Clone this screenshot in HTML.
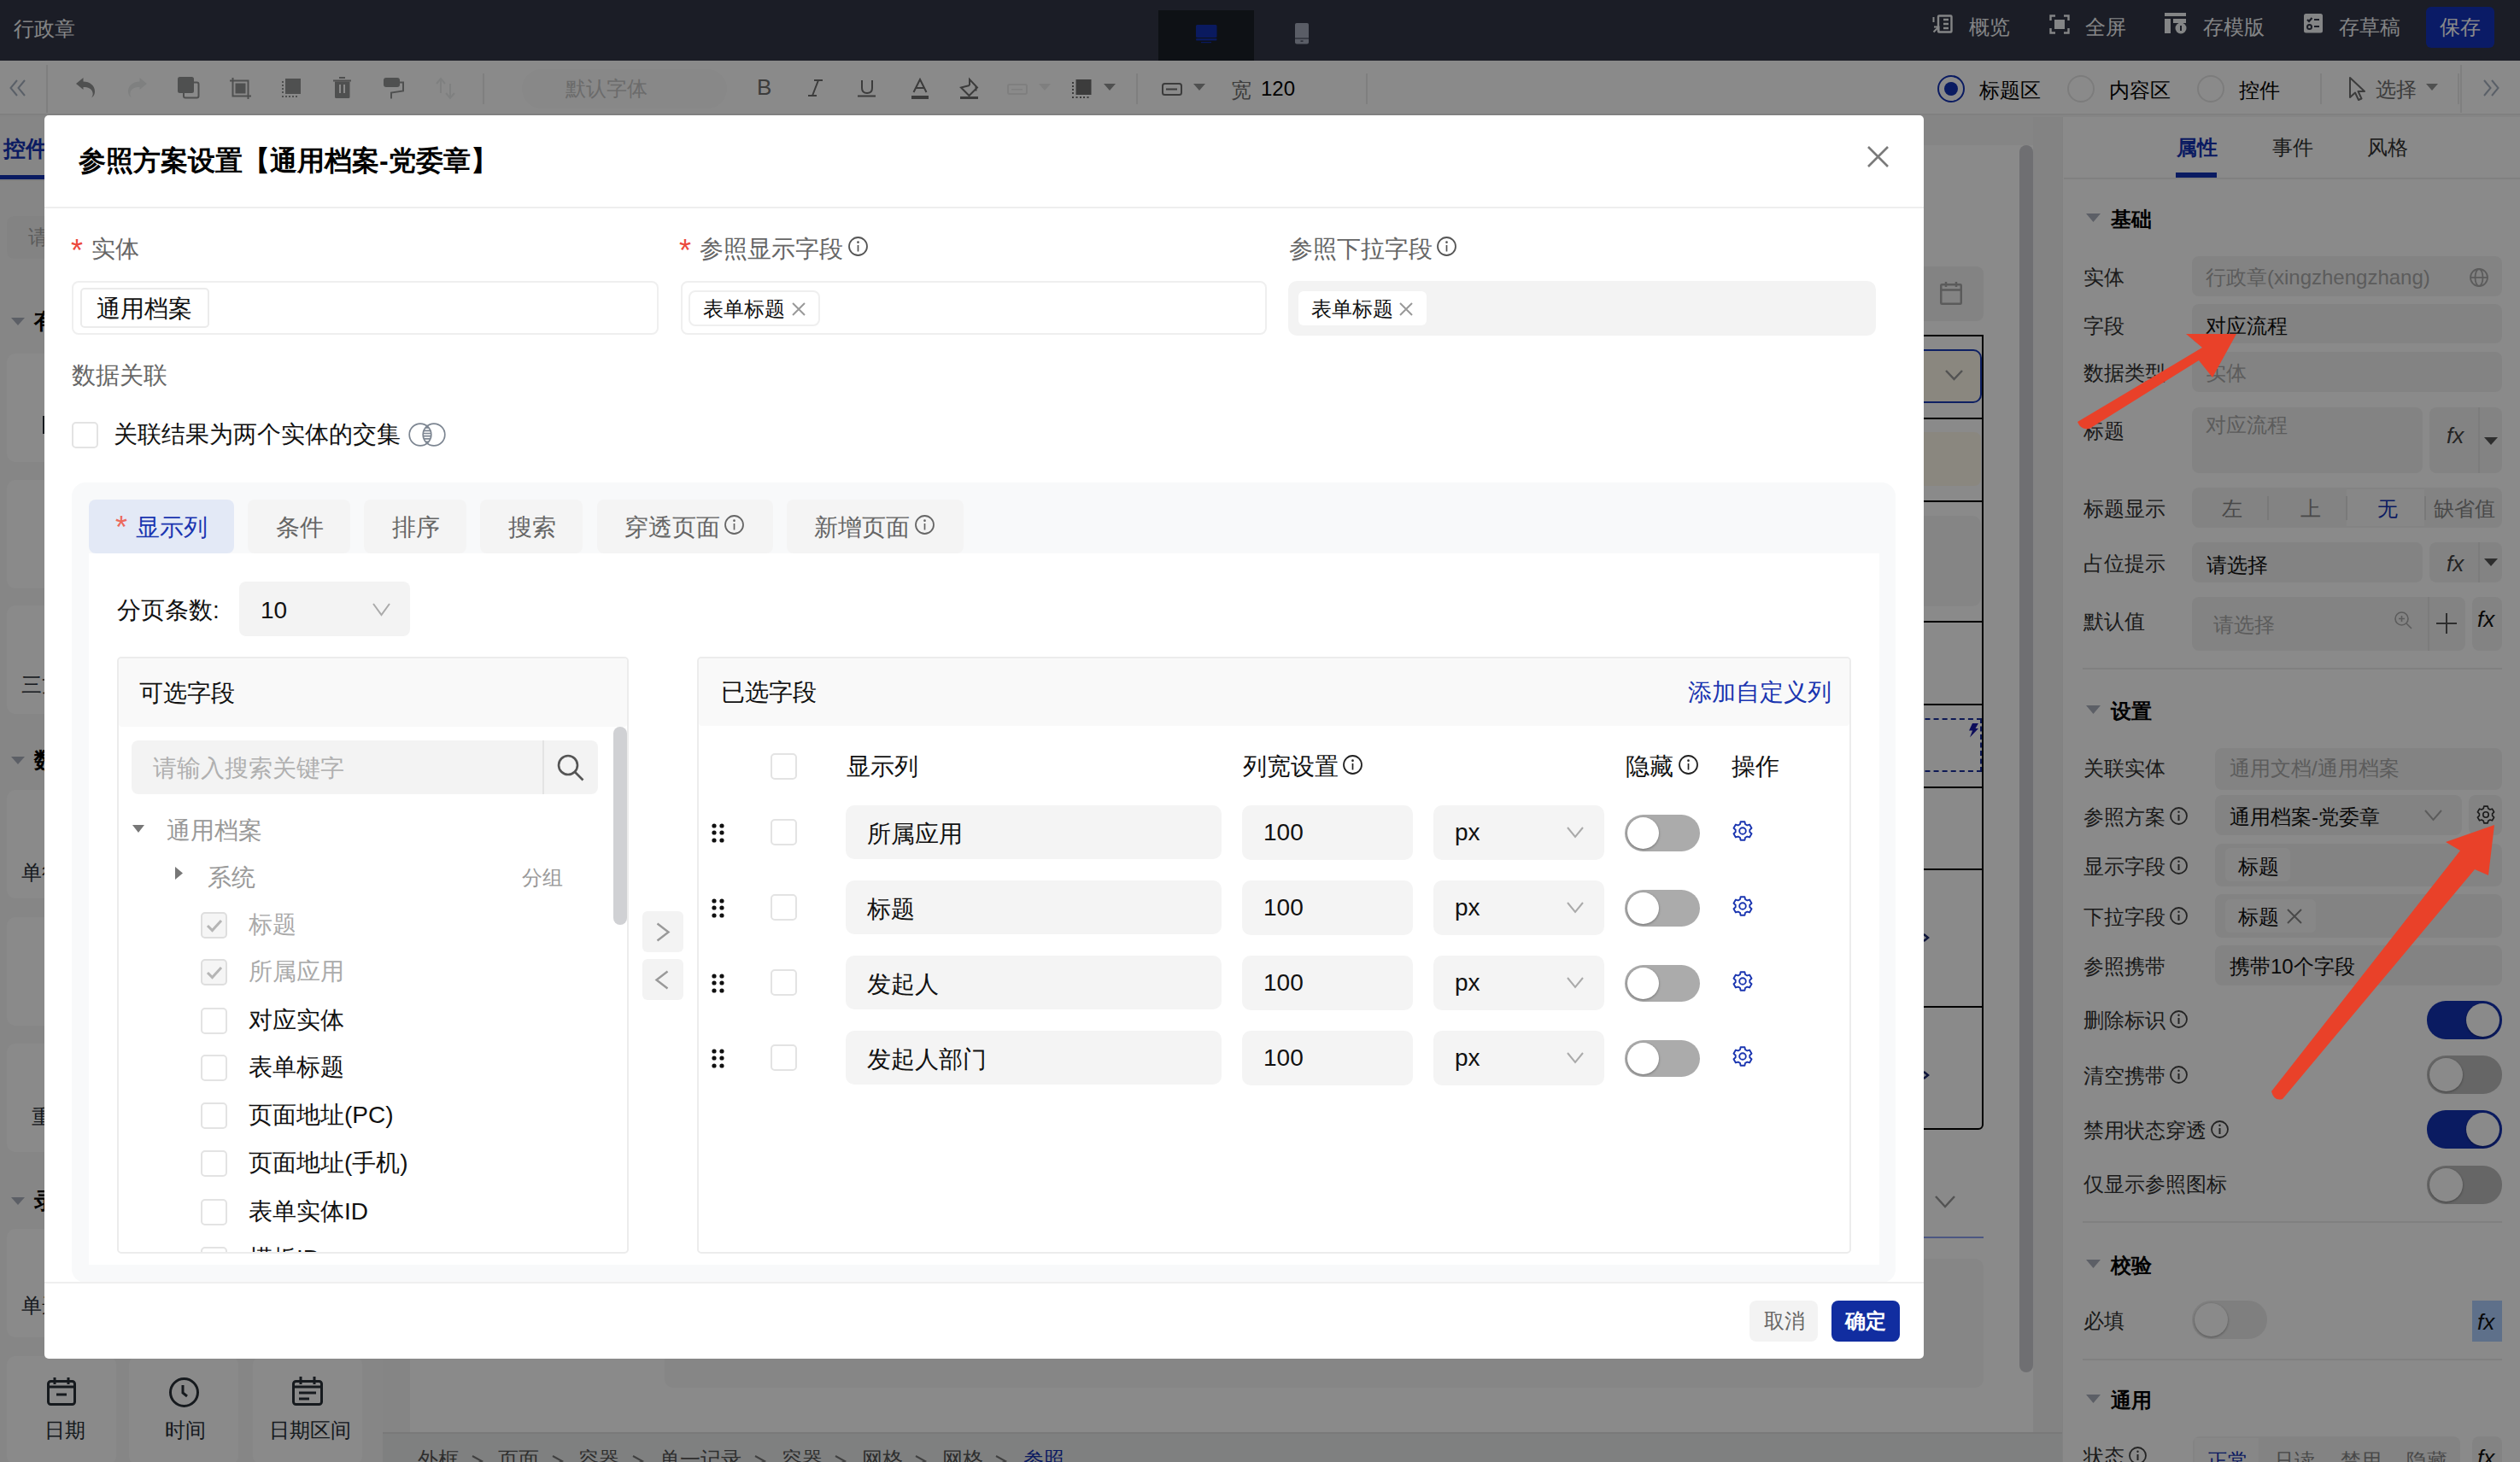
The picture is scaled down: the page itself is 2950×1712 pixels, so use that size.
<!DOCTYPE html>
<html><head><meta charset="utf-8">
<style>
*{box-sizing:border-box;margin:0;padding:0}
html,body{width:2950px;height:1712px;overflow:hidden;background:#f5f5f5;font-family:"Liberation Sans",sans-serif;color:#111}
.a{position:absolute}
.t{position:absolute;line-height:1;white-space:nowrap}
svg{position:absolute;overflow:visible}
.f24{font-size:24px}.f26{font-size:26px}.f28{font-size:28px}
.g6{color:#666}.g9{color:#aaa}
.cb{position:absolute;width:31px;height:31px;border:2px solid #e3e3e3;border-radius:5px;background:#fff}
.inp{position:absolute;background:#f3f3f3;border-radius:8px}
.tg{position:absolute;border-radius:22px}
.knob{position:absolute;background:#fff;border-radius:50%;box-shadow:0 1px 3px rgba(0,0,0,.35)}
</style></head><body>

<!-- ===== HEADER ===== -->
<div class="a" style="left:0;top:0;width:2950px;height:71px;background:#323746"></div>
<div class="t f24" style="left:16px;top:22px;color:#f4f5f8">行政章</div>
<div class="a" style="left:1356px;top:12px;width:112px;height:59px;background:#1a2128"></div>
<!-- monitor icon -->
<svg style="left:1400px;top:29px" width="25" height="22"><rect x="0" y="0" width="24.5" height="15" rx="1.5" fill="#1331af"/><rect x="0" y="16" width="24.5" height="2.5" rx="1" fill="#1331af"/><rect x="6" y="20" width="12" height="1.2" fill="#1331af"/></svg>
<!-- phone icon -->
<svg style="left:1516px;top:27px" width="16" height="25"><rect x="0" y="0" width="16" height="24.5" rx="2" fill="#a7acbd"/><rect x="0" y="17.5" width="16" height="1" fill="#323746"/><rect x="6.5" y="20.5" width="3" height="1.2" fill="#323746"/></svg>

<!-- header right -->
<svg style="left:2262px;top:17px" width="24" height="22" fill="none" stroke="#f4f5f8" stroke-width="2.4"><rect x="7" y="1.5" width="15.5" height="19" rx="1"/><path d="M13 6h6M13 11h6M13 16h6"/><path d="M1.5 3v6M1.5 20.5l6-6M2 14.5h5.5v5.5" stroke-width="2"/></svg>
<div class="t f24" style="left:2305px;top:20px;color:#f4f5f8">概览</div>
<svg style="left:2399px;top:17px" width="24" height="23" fill="none" stroke="#f4f5f8" stroke-width="2.4"><path d="M1.5 7V1.5H7M17 1.5h5.5V7M22.5 16v5.5H17M7 21.5H1.5V16"/><rect x="6" y="6" width="12" height="11" fill="#f4f5f8" stroke="none"/></svg>
<div class="t f24" style="left:2441px;top:20px;color:#f4f5f8">全屏</div>
<svg style="left:2534px;top:15px" width="27" height="25"><rect x="0" y="0" width="25" height="4" fill="#f4f5f8"/><rect x="0" y="7" width="7" height="17" fill="#f4f5f8"/><rect x="10" y="7" width="15" height="5" fill="#f4f5f8"/><circle cx="19" cy="18" r="6.5" fill="#f4f5f8"/><path d="M19 15v6" stroke="#323746" stroke-width="2"/></svg>
<div class="t f24" style="left:2579px;top:20px;color:#f4f5f8">存模版</div>
<svg style="left:2697px;top:16px" width="22" height="23"><rect x="0" y="0" width="22" height="22.5" rx="2.5" fill="#f4f5f8"/><path d="M4 7l2 2 3.5-4M12 7h6M12 15h6" stroke="#323746" stroke-width="2.2" fill="none"/><circle cx="6.5" cy="15.5" r="2.5" stroke="#323746" stroke-width="2" fill="none"/></svg>
<div class="t f24" style="left:2738px;top:20px;color:#f4f5f8">存草稿</div>
<div class="a" style="left:2840px;top:8px;width:80px;height:48px;background:#1432bc;border-radius:6px"></div>
<div class="t f24" style="left:2856px;top:20px;color:#fff">保存</div>

<!-- ===== TOOLBAR ===== -->

<div class="a" style="left:0;top:71px;width:2950px;height:64px;background:#fff;border-bottom:2px solid #ececec"></div>
<svg style="left:11px;top:93px" width="19" height="20" fill="none" stroke="#a7b2c1" stroke-width="2"><path d="M9 1L1.5 10 9 19M18 1L10.5 10 18 19"/></svg>
<div class="a" style="left:54px;top:76px;width:2px;height:56px;background:#ebebeb"></div>
<!-- undo -->
<svg style="left:89px;top:91px" width="23" height="24"><path d="M0 7L8.5 0V4.5C16 4.5 22 9 22 16C22 19 21 22 18 23.5C19.5 21.5 20 19.5 19.5 17.5C18.5 12.5 14 11 8.5 11V14Z" fill="#939494"/></svg>
<!-- redo -->
<svg style="left:150px;top:91px" width="23" height="24"><path d="M22 7L13.5 0V4.5C6 4.5 0 9 0 16C0 19 1 22 4 23.5C2.5 21.5 2 19.5 2.5 17.5C3.5 12.5 8 11 13.5 11V14Z" fill="#eaeded"/></svg>
<!-- copy -->
<svg style="left:208px;top:90px" width="26" height="26"><rect x="7" y="6.5" width="17.5" height="18" rx="2" fill="none" stroke="#939494" stroke-width="2"/><rect x="0" y="0" width="19" height="19" rx="2.5" fill="#939494"/></svg>
<!-- crop -->
<svg style="left:269px;top:91px" width="25" height="25" fill="none" stroke="#939494" stroke-width="2"><path d="M3.5 0V21.5H25M0 3.5H21.5V25"/><rect x="6.5" y="6.5" width="12" height="12" fill="#939494" stroke="none"/></svg>
<!-- dotted square -->
<svg style="left:330px;top:92px" width="23" height="22"><rect x="4" y="0" width="18" height="18" fill="#939494"/><g fill="#939494"><rect x="0" y="3" width="2" height="2"/><rect x="0" y="7" width="2" height="2"/><rect x="0" y="11" width="2" height="2"/><rect x="0" y="15" width="2" height="2"/><rect x="0" y="20" width="2" height="2"/><rect x="4" y="20" width="2" height="2"/><rect x="8" y="20" width="2" height="2"/><rect x="12" y="20" width="2" height="2"/><rect x="16" y="20" width="2" height="2"/></g></svg>
<!-- trash -->
<svg style="left:390px;top:90px" width="22" height="26"><rect x="7" y="0" width="7" height="2" fill="#939494"/><rect x="0" y="3.5" width="21" height="2" fill="#939494"/><path d="M2 5.5H19.5V23.5Q19.5 25 18 25H3.5Q2 25 2 23.5Z" fill="#939494"/><rect x="7" y="9" width="2" height="10" fill="#fff"/><rect x="12" y="9" width="2" height="10" fill="#fff"/></svg>
<!-- brush -->
<svg style="left:449px;top:91px" width="25" height="25"><rect x="0" y="0" width="19" height="11" rx="3" fill="#939494"/><path d="M19 5.5H23V15.5L9 17.5V24.5" fill="none" stroke="#939494" stroke-width="2"/></svg>
<!-- sort -->
<svg style="left:510px;top:91px" width="23" height="25" fill="none" stroke="#eaeded" stroke-width="2"><path d="M1 7L6 1 11 7M6 1V18M12 18L17 24 22 18M17 7V24"/></svg>
<div class="a" style="left:565px;top:86px;width:2px;height:36px;background:#ebebeb"></div>
<div class="a" style="left:611px;top:81px;width:240px;height:46px;background:#fbfbfb;border-radius:23px"></div>
<div class="t f24" style="left:662px;top:92px;color:#c6c6c6">默认字体</div>
<div class="t" style="left:886px;top:89px;font-size:26px;color:#6f6f6f">B</div>
<svg style="left:945px;top:93px" width="19" height="20" fill="none" stroke="#6f6f6f" stroke-width="2"><path d="M8 1H18M1 19H11M13 1L6 19"/></svg>
<svg style="left:1004px;top:93px" width="22" height="21" fill="none" stroke="#6f6f6f" stroke-width="2"><path d="M5 1V10Q5 16 11 16Q17 16 17 10V1M0 19.5H21"/></svg>
<svg style="left:1067px;top:92px" width="21" height="25"><path d="M2.5 16L10 1 17.5 16M5 11H15" fill="none" stroke="#6f6f6f" stroke-width="2"/><rect x="0" y="20" width="20" height="4" fill="#6f6f6f"/></svg>
<svg style="left:1124px;top:91px" width="22" height="26"><path d="M11 9L1 11.5 10.5 21 20 11.5 11 2V9M18.5 10V15.5" fill="none" stroke="#6f6f6f" stroke-width="2"/><rect x="0" y="22" width="21" height="3" fill="#6f6f6f"/></svg>
<svg style="left:1179px;top:98px" width="24" height="13"><rect x="1" y="1" width="22" height="11" rx="2" fill="none" stroke="#eaeaea" stroke-width="2"/><rect x="5" y="6" width="13" height="1.5" fill="#eaeaea"/></svg>
<svg style="left:1216px;top:98px" width="14" height="8"><path d="M0 0H14L7 8Z" fill="#eaeaea"/></svg>
<svg style="left:1255px;top:93px" width="23" height="23"><rect x="4.5" y="0" width="18" height="18" fill="#6f6f6f"/><g fill="#6f6f6f"><rect x="0" y="3" width="2" height="2"/><rect x="0" y="7" width="2" height="2"/><rect x="0" y="11" width="2" height="2"/><rect x="0" y="15" width="2" height="2"/><rect x="0" y="20" width="2" height="2"/><rect x="4.5" y="20" width="2" height="2"/><rect x="9" y="20" width="2" height="2"/><rect x="13" y="20" width="2" height="2"/><rect x="17.5" y="20" width="2" height="2"/></g></svg>
<svg style="left:1292px;top:98px" width="14" height="8"><path d="M0 0H14L7 8Z" fill="#939494"/></svg>
<div class="a" style="left:1330px;top:86px;width:2px;height:36px;background:#ebebeb"></div>
<svg style="left:1360px;top:97px" width="24" height="15"><rect x="1" y="1" width="22" height="13" rx="2.5" fill="none" stroke="#6f6f6f" stroke-width="2"/><rect x="5" y="6.5" width="13" height="2" fill="#6f6f6f"/></svg>
<svg style="left:1397px;top:98px" width="14" height="8"><path d="M0 0H14L7 8Z" fill="#939494"/></svg>
<div class="t f24" style="left:1441px;top:94px;color:#6f6f6f">宽</div>
<div class="t f24" style="left:1476px;top:92px;color:#000">120</div>
<div class="a" style="left:1599px;top:86px;width:2px;height:36px;background:#ebebeb"></div>
<!-- right toolbar -->
<div class="a" style="left:2268px;top:88px;width:32px;height:32px;border:2.5px solid #1432b4;border-radius:50%"></div>
<div class="a" style="left:2276px;top:96px;width:16px;height:16px;background:#1432b4;border-radius:50%"></div>
<div class="t f24" style="left:2317px;top:94px;color:#000">标题区</div>
<div class="a" style="left:2420px;top:88px;width:32px;height:32px;border:2px solid #e6e6e6;border-radius:50%"></div>
<div class="t f24" style="left:2469px;top:94px;color:#000">内容区</div>
<div class="a" style="left:2572px;top:88px;width:32px;height:32px;border:2px solid #e6e6e6;border-radius:50%"></div>
<div class="t f24" style="left:2621px;top:94px;color:#000">控件</div>
<div class="a" style="left:2716px;top:86px;width:2px;height:36px;background:#ebebeb"></div>
<svg style="left:2750px;top:90px" width="19" height="28"><path d="M1 1V24L7 18.5 11 27 14.5 25.5 10.5 17H18Z" fill="none" stroke="#6f6f6f" stroke-width="2" stroke-linejoin="round"/></svg>
<div class="t f24" style="left:2781px;top:93px;color:#6f6f6f">选择</div>
<svg style="left:2840px;top:98px" width="14" height="8"><path d="M0 0H14L7 8Z" fill="#939494"/></svg>
<div class="a" style="left:2877px;top:86px;width:2px;height:36px;background:#ebebeb"></div>
<div class="a" style="left:2880px;top:76px;width:2px;height:56px;background:#ebebeb"></div>
<svg style="left:2907px;top:93px" width="19" height="20" fill="none" stroke="#a7b2c1" stroke-width="2"><path d="M1 1L8.5 10 1 19M10 1L17.5 10 10 19"/></svg>


<!-- ===== LEFT PANEL ===== -->

<div class="a" style="left:0;top:137px;width:448px;height:1575px;background:#f8f8f8"></div>
<div class="t" style="left:4px;top:161px;font-size:26px;font-weight:bold;color:#1432b4">控件</div>
<div class="a" style="left:0;top:205px;width:62px;height:5px;background:#1432b4"></div>
<div class="a" style="left:0;top:210px;width:448px;height:2px;background:#ebebeb"></div>
<div class="inp" style="left:8px;top:253px;width:432px;height:50px"></div>
<div class="t f24" style="left:33px;top:266px;color:#aaa">请输入控件名称</div>
<svg style="left:13px;top:372px" width="16" height="9"><path d="M0 0H16L8 9Z" fill="#abb0bd"/></svg>
<div class="t" style="left:40px;top:363px;font-size:26px;font-weight:bold;color:#000">有效数据</div>
<div class="a" style="left:8px;top:414px;width:128px;height:127px;background:#fff;border-radius:10px"></div>
<div class="a" style="left:151px;top:414px;width:128px;height:127px;background:#fff;border-radius:10px"></div>
<div class="a" style="left:296px;top:414px;width:128px;height:127px;background:#fff;border-radius:10px"></div>
<div class="a" style="left:8px;top:562px;width:128px;height:127px;background:#fff;border-radius:10px"></div>
<div class="a" style="left:151px;top:562px;width:128px;height:127px;background:#fff;border-radius:10px"></div>
<div class="a" style="left:296px;top:562px;width:128px;height:127px;background:#fff;border-radius:10px"></div>
<div class="a" style="left:8px;top:709px;width:128px;height:127px;background:#fff;border-radius:10px"></div>
<div class="a" style="left:151px;top:709px;width:128px;height:127px;background:#fff;border-radius:10px"></div>
<div class="a" style="left:296px;top:709px;width:128px;height:127px;background:#fff;border-radius:10px"></div>
<svg style="left:13px;top:886px" width="16" height="9"><path d="M0 0H16L8 9Z" fill="#abb0bd"/></svg>
<div class="t" style="left:40px;top:877px;font-size:26px;font-weight:bold;color:#000">数据录入</div>
<div class="a" style="left:8px;top:925px;width:128px;height:127px;background:#fff;border-radius:10px"></div>
<div class="a" style="left:151px;top:925px;width:128px;height:127px;background:#fff;border-radius:10px"></div>
<div class="a" style="left:296px;top:925px;width:128px;height:127px;background:#fff;border-radius:10px"></div>
<div class="a" style="left:8px;top:1074px;width:128px;height:127px;background:#fff;border-radius:10px"></div>
<div class="a" style="left:151px;top:1074px;width:128px;height:127px;background:#fff;border-radius:10px"></div>
<div class="a" style="left:296px;top:1074px;width:128px;height:127px;background:#fff;border-radius:10px"></div>
<div class="a" style="left:8px;top:1222px;width:128px;height:127px;background:#fff;border-radius:10px"></div>
<div class="a" style="left:151px;top:1222px;width:128px;height:127px;background:#fff;border-radius:10px"></div>
<div class="a" style="left:296px;top:1222px;width:128px;height:127px;background:#fff;border-radius:10px"></div>
<svg style="left:13px;top:1402px" width="16" height="9"><path d="M0 0H16L8 9Z" fill="#abb0bd"/></svg>
<div class="t" style="left:40px;top:1393px;font-size:26px;font-weight:bold;color:#000">录入组件</div>
<div class="a" style="left:8px;top:1439px;width:128px;height:127px;background:#fff;border-radius:10px"></div>
<div class="a" style="left:151px;top:1439px;width:128px;height:127px;background:#fff;border-radius:10px"></div>
<div class="a" style="left:296px;top:1439px;width:128px;height:127px;background:#fff;border-radius:10px"></div>
<div class="a" style="left:8px;top:1588px;width:128px;height:127px;background:#fff;border-radius:10px"></div>
<div class="a" style="left:151px;top:1588px;width:128px;height:127px;background:#fff;border-radius:10px"></div>
<div class="a" style="left:296px;top:1588px;width:128px;height:127px;background:#fff;border-radius:10px"></div>
<div class="a" style="left:50px;top:487px;width:3px;height:21px;background:#2a3038"></div>
<div class="t f24" style="left:25px;top:790px;color:#2a3038">三方参照</div>
<div class="t f24" style="left:25px;top:1010px;color:#2a3038">单行文本</div>
<div class="t f24" style="left:37px;top:1296px;color:#2a3038">重复表</div>
<div class="t f24" style="left:25px;top:1517px;color:#2a3038">单选按钮</div>

<svg style="left:55px;top:1613px" width="34" height="33" fill="none" stroke="#2a3038" stroke-width="3"><rect x="1.5" y="4.5" width="31" height="27" rx="3"/><path d="M9 0V8M25 0V8M1.5 11H32.5M11 20H23"/></svg>
<div class="t f24" style="left:52px;top:1663px;color:#2a3038">日期</div>
<svg style="left:198px;top:1613px" width="35" height="35" fill="none" stroke="#2a3038" stroke-width="3"><circle cx="17.5" cy="17.5" r="16"/><path d="M16 9V18L21 22"/></svg>
<div class="t f24" style="left:193px;top:1663px;color:#2a3038">时间</div>
<svg style="left:342px;top:1612px" width="36" height="34" fill="none" stroke="#2a3038" stroke-width="3"><rect x="1.5" y="5.5" width="33" height="27" rx="3"/><path d="M10 0V9M26 0V9M1.5 12H34.5M8 19H28M8 26H20"/></svg>
<div class="t f24" style="left:315px;top:1663px;color:#2a3038">日期区间</div>


<!-- ===== CANVAS ===== -->

<div class="a" style="left:448px;top:137px;width:1966px;height:1540px;background:#f5f5f5"></div>
<div class="a" style="left:480px;top:170px;width:1900px;height:1507px;background:#fff"></div>
<div class="a" style="left:2364px;top:170px;width:16px;height:1437px;background:#cdced3;border-radius:8px"></div>
<div class="a" style="left:2380px;top:137px;width:34px;height:1575px;background:#f2f2f2"></div>
<div class="a" style="left:1900px;top:312px;width:422px;height:64px;background:#f3f3f3;border-radius:8px"></div>
<svg style="left:2271px;top:330px" width="26" height="27" fill="none" stroke="#a9a9a9" stroke-width="2.5"><rect x="1.25" y="3.25" width="23.5" height="22.5" rx="1"/><path d="M7 0V6M19 0V6M1.25 9.5H24.75"/></svg>
<div class="a" style="left:1800px;top:392px;width:522px;height:931px;border:2px solid #000;border-radius:0 0 6px 0"></div>
<div class="a" style="left:1800px;top:489px;width:522px;height:2px;background:#000"></div>
<div class="a" style="left:1800px;top:586px;width:522px;height:2px;background:#000"></div>
<div class="a" style="left:1800px;top:727px;width:522px;height:2px;background:#000"></div>
<div class="a" style="left:1800px;top:824px;width:522px;height:2px;background:#000"></div>
<div class="a" style="left:1800px;top:921px;width:522px;height:2px;background:#000"></div>
<div class="a" style="left:1800px;top:1017px;width:522px;height:2px;background:#000"></div>
<div class="a" style="left:1800px;top:1178px;width:522px;height:2px;background:#000"></div>
<div class="a" style="left:1850px;top:409px;width:470px;height:63px;background:#fffaeb;border:2.5px solid #1a3bb8;border-radius:10px"></div>
<svg style="left:2277px;top:433px" width="21" height="13" fill="none" stroke="#999" stroke-width="2.5"><path d="M1 1L10.5 11 20 1"/></svg>
<div class="a" style="left:1850px;top:506px;width:469px;height:63px;background:#fffaeb;border-radius:8px"></div>
<div class="a" style="left:1850px;top:604px;width:469px;height:106px;background:#f6f6f6;border-radius:10px"></div>
<div class="a" style="left:1850px;top:841px;width:470px;height:63px;border:2px dashed #1a2f9c"></div>
<svg style="left:2304px;top:847px" width="13" height="17"><path d="M5 0H12L8.5 6H12L2 16.5 5 8.5H1Z" fill="#1a1aa8"/></svg>
<svg style="left:2265px;top:1400px" width="24" height="15" fill="none" stroke="#999" stroke-width="2.5"><path d="M1 1L12 13 23 1"/></svg>
<svg style="left:2250px;top:1093px" width="10" height="10"><path d="M2 1L7 5 2 9" fill="none" stroke="#1c2a6e" stroke-width="2.5"/></svg>
<svg style="left:2250px;top:1254px" width="10" height="10"><path d="M2 1L7 5 2 9" fill="none" stroke="#1c2a6e" stroke-width="2.5"/></svg>
<div class="a" style="left:1800px;top:1448px;width:522px;height:2px;background:#8ca2f0"></div>
<div class="a" style="left:778px;top:1474px;width:1544px;height:151px;background:#f7f7f7;border-radius:10px"></div>
<div class="a" style="left:448px;top:1677px;width:1966px;height:35px;background:#ebeded;border-top:2px solid #e0e0e0"></div>
<div class="t f24" style="left:489px;top:1697px;color:#555">外框</div>
<div class="t f24" style="left:583px;top:1697px;color:#555">页面</div>
<div class="t f24" style="left:677px;top:1697px;color:#555">容器</div>
<div class="t f24" style="left:772px;top:1697px;color:#555">单一记录</div>
<div class="t f24" style="left:915px;top:1697px;color:#555">容器</div>
<div class="t f24" style="left:1009px;top:1697px;color:#555">网格</div>
<div class="t f24" style="left:1103px;top:1697px;color:#555">网格</div>
<svg style="left:552px;top:1704px" width="13" height="14" fill="none" stroke="#777" stroke-width="2"><path d="M1 1L12 7 1 13"/></svg>
<svg style="left:646px;top:1704px" width="13" height="14" fill="none" stroke="#777" stroke-width="2"><path d="M1 1L12 7 1 13"/></svg>
<svg style="left:740px;top:1704px" width="13" height="14" fill="none" stroke="#777" stroke-width="2"><path d="M1 1L12 7 1 13"/></svg>
<svg style="left:883px;top:1704px" width="13" height="14" fill="none" stroke="#777" stroke-width="2"><path d="M1 1L12 7 1 13"/></svg>
<svg style="left:977px;top:1704px" width="13" height="14" fill="none" stroke="#777" stroke-width="2"><path d="M1 1L12 7 1 13"/></svg>
<svg style="left:1071px;top:1704px" width="13" height="14" fill="none" stroke="#777" stroke-width="2"><path d="M1 1L12 7 1 13"/></svg>
<svg style="left:1165px;top:1704px" width="13" height="14" fill="none" stroke="#777" stroke-width="2"><path d="M1 1L12 7 1 13"/></svg>
<div class="t f24" style="left:1198px;top:1697px;color:#1432b4">参照</div>


<!-- ===== RIGHT PANEL ===== -->

<div class="a" style="left:2414px;top:137px;width:536px;height:1575px;background:#fff;border-left:1px solid #f0f0f0"></div>
<div class="t f24" style="left:2548px;top:161px;color:#1432b4;font-weight:bold">属性</div>
<div class="t f24" style="left:2660px;top:161px;color:#333">事件</div>
<div class="t f24" style="left:2771px;top:161px;color:#333">风格</div>
<div class="a" style="left:2547px;top:202px;width:48px;height:6px;background:#1432b4"></div>
<div class="a" style="left:2416px;top:208px;width:534px;height:2px;background:#ececec"></div>
<svg style="left:2442px;top:250px" width="17" height="10"><path d="M0 0H17L8.5 10Z" fill="#abb0bd"/></svg>
<div class="t f24" style="left:2471px;top:245px;font-weight:bold;color:#000">基础</div>
<div class="t f24" style="left:2439px;top:313px;color:#333">实体</div>
<div class="a" style="left:2566px;top:300px;width:363px;height:47px;background:#f3f3f3;border-radius:8px"></div>
<div class="t f24" style="left:2582px;top:313px;color:#aaa">行政章(xingzhengzhang)</div>
<svg style="left:2891px;top:314px" width="22" height="22" fill="none" stroke="#aaa" stroke-width="1.8"><circle cx="11" cy="11" r="10"/><ellipse cx="11" cy="11" rx="4.5" ry="10"/><path d="M1 11H21"/></svg>
<div class="t f24" style="left:2439px;top:370px;color:#333">字段</div>
<div class="a" style="left:2566px;top:356px;width:363px;height:46px;background:#f3f3f3;border-radius:8px"></div>
<div class="t f24" style="left:2582px;top:370px;color:#111">对应流程</div>
<div class="t f24" style="left:2439px;top:425px;color:#333">数据类型</div>
<div class="a" style="left:2566px;top:412px;width:363px;height:47px;background:#f3f3f3;border-radius:8px"></div>
<div class="t f24" style="left:2582px;top:425px;color:#aaa">实体</div>
<div class="t f24" style="left:2439px;top:493px;color:#333">标题</div>
<div class="a" style="left:2566px;top:477px;width:270px;height:77px;background:#f3f3f3;border-radius:8px"></div>
<div class="t f24" style="left:2582px;top:486px;color:#aaa">对应流程</div>
<div class="a" style="left:2844px;top:477px;width:85px;height:77px;background:#f3f3f3;border-radius:8px"></div>
<div class="a" style="left:2901px;top:477px;width:2px;height:77px;background:#e6e6e6"></div>
<div class="t" style="left:2864px;top:497px;font-size:26px;font-style:italic;color:#444">fx</div>
<svg style="left:2908px;top:512px" width="16" height="9"><path d="M0 0H16L8 9Z" fill="#555"/></svg>
<div class="t f24" style="left:2439px;top:584px;color:#333">标题显示</div>
<div class="a" style="left:2566px;top:571px;width:363px;height:47px;background:#f3f3f3;border-radius:8px"></div>
<div class="a" style="left:2747px;top:573px;width:91px;height:43px;background:#fafafa"></div>
<div class="a" style="left:2654px;top:581px;width:2px;height:28px;background:#e0e0e0"></div>
<div class="a" style="left:2746px;top:581px;width:2px;height:28px;background:#e0e0e0"></div>
<div class="a" style="left:2838px;top:581px;width:2px;height:28px;background:#e0e0e0"></div>
<div class="t f24" style="left:2601px;top:584px;color:#888">左</div>
<div class="t f24" style="left:2693px;top:584px;color:#888">上</div>
<div class="t f24" style="left:2783px;top:584px;color:#1432b4">无</div>
<div class="t f24" style="left:2849px;top:584px;color:#888">缺省值</div>
<div class="t f24" style="left:2439px;top:648px;color:#333">占位提示</div>
<div class="a" style="left:2566px;top:635px;width:270px;height:47px;background:#f3f3f3;border-radius:8px"></div>
<div class="t f24" style="left:2583px;top:650px;color:#111">请选择</div>
<div class="a" style="left:2844px;top:635px;width:85px;height:47px;background:#f3f3f3;border-radius:8px"></div>
<div class="a" style="left:2901px;top:635px;width:2px;height:47px;background:#e6e6e6"></div>
<div class="t" style="left:2864px;top:647px;font-size:26px;font-style:italic;color:#444">fx</div>
<svg style="left:2908px;top:654px" width="16" height="9"><path d="M0 0H16L8 9Z" fill="#555"/></svg>
<div class="t f24" style="left:2439px;top:716px;color:#333">默认值</div>
<div class="a" style="left:2566px;top:699px;width:320px;height:63px;background:#f3f3f3;border-radius:8px"></div>
<div class="t f24" style="left:2591px;top:720px;color:#aaa">请选择</div>
<svg style="left:2803px;top:716px" width="21" height="21" fill="none" stroke="#aaa" stroke-width="1.6"><circle cx="8.5" cy="8.5" r="7.5"/><path d="M14 14L20 20M8.5 5V12M5 8.5H12"/></svg>
<div class="a" style="left:2842px;top:699px;width:2px;height:63px;background:#e6e6e6"></div>
<svg style="left:2852px;top:718px" width="24" height="24" fill="none" stroke="#555" stroke-width="2"><path d="M12 0V24M0 12H24"/></svg>
<div class="a" style="left:2894px;top:699px;width:35px;height:63px;background:#f3f3f3;border-radius:8px"></div>
<div class="t" style="left:2900px;top:712px;font-size:26px;font-style:italic;color:#111">fx</div>
<div class="a" style="left:2438px;top:782px;width:491px;height:2px;background:#ececec"></div>
<svg style="left:2442px;top:826px" width="17" height="10"><path d="M0 0H17L8.5 10Z" fill="#abb0bd"/></svg>
<div class="t f24" style="left:2471px;top:821px;font-weight:bold;color:#000">设置</div>
<div class="t f24" style="left:2439px;top:888px;color:#333">关联实体</div>
<div class="a" style="left:2593px;top:876px;width:336px;height:49px;background:#f3f3f3;border-radius:8px"></div>
<div class="t f24" style="left:2610px;top:888px;color:#aaa">通用文档/通用档案</div>
<div class="t f24" style="left:2439px;top:945px;color:#333">参照方案</div>
<svg style="left:2540px;top:945px" width="21" height="21" fill="none" stroke="#444"><circle cx="10.5" cy="10.5" r="9.5" stroke-width="1.8"/><path d="M10.5 9V16" stroke-width="2"/><circle cx="10.5" cy="5.8" r="1.2" fill="#444" stroke="none"/></svg>
<div class="a" style="left:2593px;top:931px;width:289px;height:47px;background:#f3f3f3;border-radius:8px"></div>
<div class="t f24" style="left:2610px;top:945px;color:#111">通用档案-党委章</div>
<svg style="left:2838px;top:948px" width="21" height="14" fill="none" stroke="#aaa" stroke-width="2"><path d="M1 1L10.5 12 20 1"/></svg>
<div class="a" style="left:2890px;top:931px;width:39px;height:47px;background:#f3f3f3;border-radius:8px"></div>
<svg style="left:2899px;top:943px" width="22" height="22" viewBox="0 0 24 24" fill="none" stroke="#333" stroke-width="1.8"><path d="M9.60 1.26 L14.40 1.26 L15.01 4.16 L17.29 5.47 L20.10 4.55 L22.50 8.71 L20.30 10.69 L20.30 13.31 L22.50 15.29 L20.10 19.45 L17.29 18.53 L15.01 19.84 L14.40 22.74 L9.60 22.74 L8.99 19.84 L6.71 18.53 L3.90 19.45 L1.50 15.29 L3.70 13.31 L3.70 10.69 L1.50 8.71 L3.90 4.55 L6.71 5.47 L8.99 4.16Z" stroke-linejoin="round"/><circle cx="12" cy="12" r="3.5"/></svg>
<div class="t f24" style="left:2439px;top:1003px;color:#333">显示字段</div>
<svg style="left:2540px;top:1003px" width="21" height="21" fill="none" stroke="#444"><circle cx="10.5" cy="10.5" r="9.5" stroke-width="1.8"/><path d="M10.5 9V16" stroke-width="2"/><circle cx="10.5" cy="5.8" r="1.2" fill="#444" stroke="none"/></svg>
<div class="a" style="left:2593px;top:988px;width:336px;height:50px;background:#f3f3f3;border-radius:8px"></div>
<div class="a" style="left:2605px;top:993px;width:76px;height:39px;background:#fafafa;border-radius:6px"></div>
<div class="t f24" style="left:2620px;top:1003px;color:#111">标题</div>
<div class="t f24" style="left:2439px;top:1062px;color:#333">下拉字段</div>
<svg style="left:2540px;top:1062px" width="21" height="21" fill="none" stroke="#444"><circle cx="10.5" cy="10.5" r="9.5" stroke-width="1.8"/><path d="M10.5 9V16" stroke-width="2"/><circle cx="10.5" cy="5.8" r="1.2" fill="#444" stroke="none"/></svg>
<div class="a" style="left:2593px;top:1047px;width:336px;height:51px;background:#f3f3f3;border-radius:8px"></div>
<div class="a" style="left:2605px;top:1053px;width:106px;height:39px;background:#fafafa;border-radius:6px"></div>
<div class="t f24" style="left:2620px;top:1062px;color:#111">标题</div>
<svg style="left:2677px;top:1064px" width="18" height="18" fill="none" stroke="#888" stroke-width="2"><path d="M1 1L17 17M17 1L1 17"/></svg>
<div class="t f24" style="left:2439px;top:1120px;color:#333">参照携带</div>
<div class="a" style="left:2593px;top:1107px;width:336px;height:47px;background:#f3f3f3;border-radius:8px"></div>
<div class="t f24" style="left:2610px;top:1120px;color:#111">携带10个字段</div>
<div class="t f24" style="left:2439px;top:1183px;color:#333">删除标识</div>
<svg style="left:2540px;top:1183px" width="21" height="21" fill="none" stroke="#444"><circle cx="10.5" cy="10.5" r="9.5" stroke-width="1.8"/><path d="M10.5 9V16" stroke-width="2"/><circle cx="10.5" cy="5.8" r="1.2" fill="#444" stroke="none"/></svg>
<div class="tg" style="left:2841px;top:1172px;width:88px;height:45px;background:#1432b4"></div><div class="knob" style="left:2887px;top:1175px;width:39px;height:39px"></div>
<div class="t f24" style="left:2439px;top:1248px;color:#333">清空携带</div>
<svg style="left:2540px;top:1248px" width="21" height="21" fill="none" stroke="#444"><circle cx="10.5" cy="10.5" r="9.5" stroke-width="1.8"/><path d="M10.5 9V16" stroke-width="2"/><circle cx="10.5" cy="5.8" r="1.2" fill="#444" stroke="none"/></svg>
<div class="tg" style="left:2841px;top:1236px;width:88px;height:45px;background:#bdbdbd"></div><div class="knob" style="left:2844px;top:1239px;width:39px;height:39px"></div>
<div class="t f24" style="left:2439px;top:1312px;color:#333">禁用状态穿透</div>
<svg style="left:2588px;top:1312px" width="21" height="21" fill="none" stroke="#444"><circle cx="10.5" cy="10.5" r="9.5" stroke-width="1.8"/><path d="M10.5 9V16" stroke-width="2"/><circle cx="10.5" cy="5.8" r="1.2" fill="#444" stroke="none"/></svg>
<div class="tg" style="left:2841px;top:1300px;width:88px;height:45px;background:#1432b4"></div><div class="knob" style="left:2887px;top:1303px;width:39px;height:39px"></div>
<div class="t f24" style="left:2439px;top:1375px;color:#333">仅显示参照图标</div>
<div class="tg" style="left:2841px;top:1365px;width:88px;height:45px;background:#bdbdbd"></div><div class="knob" style="left:2844px;top:1368px;width:39px;height:39px"></div>
<div class="a" style="left:2438px;top:1430px;width:491px;height:2px;background:#ececec"></div>
<svg style="left:2442px;top:1475px" width="17" height="10"><path d="M0 0H17L8.5 10Z" fill="#abb0bd"/></svg>
<div class="t f24" style="left:2471px;top:1470px;font-weight:bold;color:#000">校验</div>
<div class="t f24" style="left:2439px;top:1535px;color:#333">必填</div>
<div class="tg" style="left:2566px;top:1523px;width:88px;height:45px;background:#ebebeb"></div><div class="knob" style="left:2569px;top:1526px;width:39px;height:39px"></div>
<div class="a" style="left:2894px;top:1523px;width:35px;height:48px;background:#aecfff;border-radius:0px"></div>
<div class="t" style="left:2900px;top:1535px;font-size:26px;font-style:italic;color:#111">fx</div>
<div class="a" style="left:2438px;top:1591px;width:491px;height:2px;background:#ececec"></div>
<svg style="left:2442px;top:1633px" width="17" height="10"><path d="M0 0H17L8.5 10Z" fill="#abb0bd"/></svg>
<div class="t f24" style="left:2471px;top:1628px;font-weight:bold;color:#000">通用</div>
<div class="t f24" style="left:2439px;top:1694px;color:#333">状态</div>
<svg style="left:2492px;top:1694px" width="21" height="21" fill="none" stroke="#444"><circle cx="10.5" cy="10.5" r="9.5" stroke-width="1.8"/><path d="M10.5 9V16" stroke-width="2"/><circle cx="10.5" cy="5.8" r="1.2" fill="#444" stroke="none"/></svg>
<div class="a" style="left:2567px;top:1682px;width:313px;height:50px;background:#f3f3f3;border-radius:8px"></div>
<div class="a" style="left:2569px;top:1684px;width:75px;height:46px;background:#fafafa"></div>
<div class="t f24" style="left:2584px;top:1699px;color:#1432b4">正常</div>
<div class="t f24" style="left:2662px;top:1699px;color:#888">只读</div>
<div class="t f24" style="left:2740px;top:1699px;color:#888">禁用</div>
<div class="t f24" style="left:2817px;top:1699px;color:#888">隐藏</div>
<div class="a" style="left:2894px;top:1682px;width:35px;height:50px;background:#f3f3f3;border-radius:8px"></div>
<div class="t" style="left:2900px;top:1694px;font-size:26px;font-style:italic;color:#111">fx</div>




<!-- ===== MASK ===== -->
<div class="a" style="left:0;top:0;width:2950px;height:1712px;background:rgba(0,0,0,0.46)"></div>

<!-- ===== MODAL ===== -->

<div class="a" style="left:52px;top:135px;width:2200px;height:1456px;background:#fff;border-radius:5px"></div>
<div class="t" style="left:92px;top:172px;font-size:32px;font-weight:bold;color:#000">参照方案设置【通用档案-党委章】</div>
<svg style="left:2186px;top:171px" width="25" height="25" fill="none" stroke="#7a7a7a" stroke-width="2.6"><path d="M1 1L24 24M24 1L1 24"/></svg>
<div class="a" style="left:52px;top:242px;width:2200px;height:2px;background:#eeeeee"></div>
<div class="t" style="left:83px;top:276px;font-size:36px;color:#ec4a3c">*</div>
<div class="t" style="left:107px;top:278px;font-size:28px;color:#666;">实体</div>
<div class="t" style="left:795px;top:276px;font-size:36px;color:#ec4a3c">*</div>
<div class="t" style="left:819px;top:278px;font-size:28px;color:#666;">参照显示字段</div>
<svg style="left:993px;top:277px" width="23" height="23" fill="none" stroke="#555"><circle cx="11.5" cy="11.5" r="10.5" stroke-width="1.8"/><path d="M11.5 10.0V17.5" stroke-width="1.7"/><circle cx="11.5" cy="6.7" r="1.35" fill="#555" stroke="none"/></svg>
<div class="t" style="left:1509px;top:278px;font-size:28px;color:#666;">参照下拉字段</div>
<svg style="left:1682px;top:277px" width="23" height="23" fill="none" stroke="#555"><circle cx="11.5" cy="11.5" r="10.5" stroke-width="1.8"/><path d="M11.5 10.0V17.5" stroke-width="1.7"/><circle cx="11.5" cy="6.7" r="1.35" fill="#555" stroke="none"/></svg>
<div class="a" style="left:84px;top:329px;width:687px;height:63px;background:#fff;border-radius:8px;border:2px solid #efefef"></div>
<div class="a" style="left:94px;top:337px;width:151px;height:47px;background:#fff;border-radius:5px;border:2px solid #ebebeb"></div>
<div class="t" style="left:113px;top:348px;font-size:28px;color:#111;">通用档案</div>
<div class="a" style="left:797px;top:329px;width:686px;height:63px;background:#fff;border-radius:8px;border:2px solid #efefef"></div>
<div class="a" style="left:806px;top:340px;width:154px;height:42px;background:#fff;border-radius:8px;border:2px solid #efefef"></div>
<div class="t" style="left:823px;top:350px;font-size:24px;color:#111;">表单标题</div>
<svg style="left:927px;top:354px" width="16" height="16" fill="none" stroke="#999" stroke-width="2"><path d="M1 1L15 15M15 1L1 15"/></svg>
<div class="a" style="left:1508px;top:329px;width:688px;height:64px;background:#f3f3f3;border-radius:10px;"></div>
<div class="a" style="left:1520px;top:341px;width:150px;height:40px;background:#fff;border-radius:6px;"></div>
<div class="t" style="left:1535px;top:350px;font-size:24px;color:#111;">表单标题</div>
<svg style="left:1638px;top:354px" width="16" height="16" fill="none" stroke="#999" stroke-width="2"><path d="M1 1L15 15M15 1L1 15"/></svg>
<div class="t" style="left:84px;top:426px;font-size:28px;color:#666;">数据关联</div>
<div class="cb" style="left:84px;top:494px"></div>
<div class="t" style="left:133px;top:495px;font-size:28px;color:#111;">关联结果为两个实体的交集</div>
<svg style="left:477px;top:495px" width="46" height="28"><defs><clipPath id="lensA"><circle cx="15" cy="14" r="12.6"/></clipPath><clipPath id="lensB"><circle cx="31" cy="14" r="12.6"/></clipPath></defs><g clip-path="url(#lensA)"><g clip-path="url(#lensB)"><path d="M15 5.8H35M15 9.3H35M15 12.5H35M15 15.7H35M15 18.9H35M15 22.3H35" stroke="#7c8591" stroke-width="1.7"/></g></g><g fill="none" stroke="#7c8591" stroke-width="1.7"><circle cx="15" cy="14" r="12.8"/><circle cx="31" cy="14" r="12.8"/></g></svg>
<div class="a" style="left:84px;top:565px;width:2135px;height:937px;background:#f8f9fa;border-radius:16px 16px 16px 16px;"></div>
<div class="a" style="left:104px;top:648px;width:2096px;height:833px;background:#fff;border-radius:0px;"></div>
<div class="a" style="left:104px;top:585px;width:170px;height:63px;background:#e3e9f6;border-radius:8px;"></div>
<div class="t" style="left:135px;top:600px;font-size:36px;color:#ec6a5c">*</div>
<div class="t" style="left:159px;top:604px;font-size:28px;color:#1a35b0;">显示列</div>
<div class="a" style="left:290px;top:585px;width:120px;height:63px;background:#f4f4f4;border-radius:8px;"></div>
<div class="t" style="left:323px;top:604px;font-size:28px;color:#666;">条件</div>
<div class="a" style="left:426px;top:585px;width:120px;height:63px;background:#f4f4f4;border-radius:8px;"></div>
<div class="t" style="left:459px;top:604px;font-size:28px;color:#666;">排序</div>
<div class="a" style="left:562px;top:585px;width:120px;height:63px;background:#f4f4f4;border-radius:8px;"></div>
<div class="t" style="left:595px;top:604px;font-size:28px;color:#666;">搜索</div>
<div class="a" style="left:699px;top:585px;width:206px;height:63px;background:#f4f4f4;border-radius:8px;"></div>
<div class="t" style="left:731px;top:604px;font-size:28px;color:#666;">穿透页面</div>
<svg style="left:848px;top:603px" width="23" height="23" fill="none" stroke="#666"><circle cx="11.5" cy="11.5" r="10.5" stroke-width="1.8"/><path d="M11.5 10.0V17.5" stroke-width="1.7"/><circle cx="11.5" cy="6.7" r="1.35" fill="#666" stroke="none"/></svg>
<div class="a" style="left:921px;top:585px;width:207px;height:63px;background:#f4f4f4;border-radius:8px;"></div>
<div class="t" style="left:953px;top:604px;font-size:28px;color:#666;">新增页面</div>
<svg style="left:1071px;top:603px" width="23" height="23" fill="none" stroke="#666"><circle cx="11.5" cy="11.5" r="10.5" stroke-width="1.8"/><path d="M11.5 10.0V17.5" stroke-width="1.7"/><circle cx="11.5" cy="6.7" r="1.35" fill="#666" stroke="none"/></svg>
<div class="t" style="left:137px;top:701px;font-size:28px;color:#111;">分页条数:</div>
<div class="a" style="left:280px;top:681px;width:200px;height:64px;background:#f3f3f3;border-radius:8px;"></div>
<div class="t" style="left:305px;top:701px;font-size:28px;color:#111;">10</div>
<svg style="left:436px;top:706px" width="21" height="15" fill="none" stroke="#aaa" stroke-width="2"><path d="M1 1L10.5 14L20 1"/></svg>
<div class="a" style="left:137px;top:769px;width:599px;height:699px;background:#fff;border-radius:5px;border:2px solid #ececec"></div>
<div class="a" style="left:139px;top:771px;width:595px;height:80px;background:#f9f9f9;border-radius:4px;"></div>
<div class="t" style="left:163px;top:798px;font-size:28px;color:#111;">可选字段</div>
<div class="a" style="left:154px;top:867px;width:546px;height:63px;background:#f3f3f3;border-radius:8px;"></div>
<div class="a" style="left:635px;top:867px;width:2px;height:63px;background:#e3e3e3"></div>
<div class="t" style="left:179px;top:886px;font-size:28px;color:#b0b0b0;">请输入搜索关键字</div>
<svg style="left:652px;top:883px" width="32" height="32" fill="none" stroke="#555" stroke-width="2.6"><circle cx="13" cy="13" r="11"/><path d="M21 21L30.5 30.5"/></svg>
<div class="a" style="left:718px;top:851px;width:16px;height:232px;background:#d0d1d4;border-radius:8px;"></div>
<svg style="left:155px;top:966px" width="14" height="9"><path d="M0 0H14L7 9Z" fill="#777"/></svg>
<div class="t" style="left:195px;top:959px;font-size:28px;color:#999;">通用档案</div>
<svg style="left:205px;top:1015px" width="9" height="15"><path d="M0 0V15L9 7.5Z" fill="#777"/></svg>
<div class="t" style="left:243px;top:1014px;font-size:28px;color:#999;">系统</div>
<div class="t" style="left:611px;top:1016px;font-size:24px;color:#999;">分组</div>
<div class="cb" style="left:235px;top:1068px;background:#f5f5f5;border-color:#dedede"></div>
<svg style="left:241px;top:1076px" width="20" height="16" fill="none" stroke="#b5b5b5" stroke-width="3"><path d="M2 8L7.5 13.5 18 2"/></svg>
<div class="t" style="left:291px;top:1069px;font-size:28px;color:#aaa;">标题</div>
<div class="cb" style="left:235px;top:1123px;background:#f5f5f5;border-color:#dedede"></div>
<svg style="left:241px;top:1131px" width="20" height="16" fill="none" stroke="#b5b5b5" stroke-width="3"><path d="M2 8L7.5 13.5 18 2"/></svg>
<div class="t" style="left:291px;top:1124px;font-size:28px;color:#aaa;">所属应用</div>
<div class="cb" style="left:235px;top:1180px"></div>
<div class="t" style="left:291px;top:1181px;font-size:28px;color:#111;">对应实体</div>
<div class="cb" style="left:235px;top:1235px"></div>
<div class="t" style="left:291px;top:1236px;font-size:28px;color:#111;">表单标题</div>
<div class="cb" style="left:235px;top:1291px"></div>
<div class="t" style="left:291px;top:1292px;font-size:28px;color:#111;">页面地址(PC)</div>
<div class="cb" style="left:235px;top:1347px"></div>
<div class="t" style="left:291px;top:1348px;font-size:28px;color:#111;">页面地址(手机)</div>
<div class="cb" style="left:235px;top:1404px"></div>
<div class="t" style="left:291px;top:1405px;font-size:28px;color:#111;">表单实体ID</div>
<div class="a" style="left:139px;top:1450px;width:595px;height:16px;overflow:hidden"><div class="cb" style="left:96px;top:10px"></div><div class="t" style="left:152px;top:10px;font-size:28px;color:#111">模板ID</div></div>
<div class="a" style="left:752px;top:1067px;width:48px;height:48px;background:#f3f3f3;border-radius:6px;"></div>
<svg style="left:768px;top:1080px" width="16" height="23" fill="none" stroke="#999" stroke-width="2.4"><path d="M1.5 1.5L14.5 11.5 1.5 21.5"/></svg>
<div class="a" style="left:752px;top:1123px;width:48px;height:48px;background:#f3f3f3;border-radius:6px;"></div>
<svg style="left:767px;top:1136px" width="16" height="23" fill="none" stroke="#999" stroke-width="2.4"><path d="M14.5 1.5L1.5 11.5 14.5 21.5"/></svg>
<div class="a" style="left:816px;top:769px;width:1351px;height:699px;background:#fff;border-radius:5px;border:2px solid #ececec"></div>
<div class="a" style="left:818px;top:771px;width:1347px;height:79px;background:#f9f9f9;border-radius:4px;"></div>
<div class="t" style="left:844px;top:797px;font-size:28px;color:#111;">已选字段</div>
<div class="t" style="left:1976px;top:797px;font-size:28px;color:#1a35b0;">添加自定义列</div>
<div class="cb" style="left:902px;top:882px"></div>
<div class="t" style="left:991px;top:884px;font-size:28px;color:#111;">显示列</div>
<div class="t" style="left:1455px;top:884px;font-size:28px;color:#111;">列宽设置</div>
<svg style="left:1572px;top:884px" width="23" height="23" fill="none" stroke="#222"><circle cx="11.5" cy="11.5" r="10.5" stroke-width="1.8"/><path d="M11.5 10.0V17.5" stroke-width="1.7"/><circle cx="11.5" cy="6.7" r="1.35" fill="#222" stroke="none"/></svg>
<div class="t" style="left:1903px;top:884px;font-size:28px;color:#111;">隐藏</div>
<svg style="left:1965px;top:884px" width="23" height="23" fill="none" stroke="#222"><circle cx="11.5" cy="11.5" r="10.5" stroke-width="1.8"/><path d="M11.5 10.0V17.5" stroke-width="1.7"/><circle cx="11.5" cy="6.7" r="1.35" fill="#222" stroke="none"/></svg>
<div class="t" style="left:2027px;top:884px;font-size:28px;color:#111;">操作</div>
<svg style="left:833px;top:964px" width="15" height="23" fill="#111"><circle cx="3" cy="3" r="2.6"/><circle cx="3" cy="11" r="2.6"/><circle cx="3" cy="20" r="2.6"/><circle cx="12" cy="3" r="2.6"/><circle cx="12" cy="11" r="2.6"/><circle cx="12" cy="20" r="2.6"/></svg>
<div class="cb" style="left:902px;top:959px"></div>
<div class="a" style="left:990px;top:943px;width:440px;height:63px;background:#f4f4f4;border-radius:10px;"></div>
<div class="t" style="left:1015px;top:963px;font-size:28px;color:#111;">所属应用</div>
<div class="a" style="left:1454px;top:943px;width:200px;height:64px;background:#f4f4f4;border-radius:10px;"></div>
<div class="t" style="left:1479px;top:961px;font-size:28px;color:#111;">100</div>
<div class="a" style="left:1678px;top:943px;width:200px;height:64px;background:#f4f4f4;border-radius:10px;"></div>
<div class="t" style="left:1703px;top:961px;font-size:28px;color:#111;">px</div>
<svg style="left:1834px;top:968px" width="20" height="13" fill="none" stroke="#aaa" stroke-width="2"><path d="M1 1L10.0 12L19 1"/></svg>
<div class="tg" style="left:1902px;top:954px;width:88px;height:43px;background:#ababab"></div><div class="knob" style="left:1905px;top:957px;width:37px;height:37px"></div>
<svg style="left:2028px;top:961px" width="24" height="24" viewBox="0 0 24 24" fill="none" stroke="#1a35b0" stroke-width="1.9"><path d="M9.60 1.26 L14.40 1.26 L15.01 4.16 L17.29 5.47 L20.10 4.55 L22.50 8.71 L20.30 10.69 L20.30 13.31 L22.50 15.29 L20.10 19.45 L17.29 18.53 L15.01 19.84 L14.40 22.74 L9.60 22.74 L8.99 19.84 L6.71 18.53 L3.90 19.45 L1.50 15.29 L3.70 13.31 L3.70 10.69 L1.50 8.71 L3.90 4.55 L6.71 5.47 L8.99 4.16Z" stroke-linejoin="round"/><circle cx="12" cy="12" r="3.8"/></svg>
<svg style="left:833px;top:1052px" width="15" height="23" fill="#111"><circle cx="3" cy="3" r="2.6"/><circle cx="3" cy="11" r="2.6"/><circle cx="3" cy="20" r="2.6"/><circle cx="12" cy="3" r="2.6"/><circle cx="12" cy="11" r="2.6"/><circle cx="12" cy="20" r="2.6"/></svg>
<div class="cb" style="left:902px;top:1047px"></div>
<div class="a" style="left:990px;top:1031px;width:440px;height:63px;background:#f4f4f4;border-radius:10px;"></div>
<div class="t" style="left:1015px;top:1051px;font-size:28px;color:#111;">标题</div>
<div class="a" style="left:1454px;top:1031px;width:200px;height:64px;background:#f4f4f4;border-radius:10px;"></div>
<div class="t" style="left:1479px;top:1049px;font-size:28px;color:#111;">100</div>
<div class="a" style="left:1678px;top:1031px;width:200px;height:64px;background:#f4f4f4;border-radius:10px;"></div>
<div class="t" style="left:1703px;top:1049px;font-size:28px;color:#111;">px</div>
<svg style="left:1834px;top:1056px" width="20" height="13" fill="none" stroke="#aaa" stroke-width="2"><path d="M1 1L10.0 12L19 1"/></svg>
<div class="tg" style="left:1902px;top:1042px;width:88px;height:43px;background:#ababab"></div><div class="knob" style="left:1905px;top:1045px;width:37px;height:37px"></div>
<svg style="left:2028px;top:1049px" width="24" height="24" viewBox="0 0 24 24" fill="none" stroke="#1a35b0" stroke-width="1.9"><path d="M9.60 1.26 L14.40 1.26 L15.01 4.16 L17.29 5.47 L20.10 4.55 L22.50 8.71 L20.30 10.69 L20.30 13.31 L22.50 15.29 L20.10 19.45 L17.29 18.53 L15.01 19.84 L14.40 22.74 L9.60 22.74 L8.99 19.84 L6.71 18.53 L3.90 19.45 L1.50 15.29 L3.70 13.31 L3.70 10.69 L1.50 8.71 L3.90 4.55 L6.71 5.47 L8.99 4.16Z" stroke-linejoin="round"/><circle cx="12" cy="12" r="3.8"/></svg>
<svg style="left:833px;top:1140px" width="15" height="23" fill="#111"><circle cx="3" cy="3" r="2.6"/><circle cx="3" cy="11" r="2.6"/><circle cx="3" cy="20" r="2.6"/><circle cx="12" cy="3" r="2.6"/><circle cx="12" cy="11" r="2.6"/><circle cx="12" cy="20" r="2.6"/></svg>
<div class="cb" style="left:902px;top:1135px"></div>
<div class="a" style="left:990px;top:1119px;width:440px;height:63px;background:#f4f4f4;border-radius:10px;"></div>
<div class="t" style="left:1015px;top:1139px;font-size:28px;color:#111;">发起人</div>
<div class="a" style="left:1454px;top:1119px;width:200px;height:64px;background:#f4f4f4;border-radius:10px;"></div>
<div class="t" style="left:1479px;top:1137px;font-size:28px;color:#111;">100</div>
<div class="a" style="left:1678px;top:1119px;width:200px;height:64px;background:#f4f4f4;border-radius:10px;"></div>
<div class="t" style="left:1703px;top:1137px;font-size:28px;color:#111;">px</div>
<svg style="left:1834px;top:1144px" width="20" height="13" fill="none" stroke="#aaa" stroke-width="2"><path d="M1 1L10.0 12L19 1"/></svg>
<div class="tg" style="left:1902px;top:1130px;width:88px;height:43px;background:#ababab"></div><div class="knob" style="left:1905px;top:1133px;width:37px;height:37px"></div>
<svg style="left:2028px;top:1137px" width="24" height="24" viewBox="0 0 24 24" fill="none" stroke="#1a35b0" stroke-width="1.9"><path d="M9.60 1.26 L14.40 1.26 L15.01 4.16 L17.29 5.47 L20.10 4.55 L22.50 8.71 L20.30 10.69 L20.30 13.31 L22.50 15.29 L20.10 19.45 L17.29 18.53 L15.01 19.84 L14.40 22.74 L9.60 22.74 L8.99 19.84 L6.71 18.53 L3.90 19.45 L1.50 15.29 L3.70 13.31 L3.70 10.69 L1.50 8.71 L3.90 4.55 L6.71 5.47 L8.99 4.16Z" stroke-linejoin="round"/><circle cx="12" cy="12" r="3.8"/></svg>
<svg style="left:833px;top:1228px" width="15" height="23" fill="#111"><circle cx="3" cy="3" r="2.6"/><circle cx="3" cy="11" r="2.6"/><circle cx="3" cy="20" r="2.6"/><circle cx="12" cy="3" r="2.6"/><circle cx="12" cy="11" r="2.6"/><circle cx="12" cy="20" r="2.6"/></svg>
<div class="cb" style="left:902px;top:1223px"></div>
<div class="a" style="left:990px;top:1207px;width:440px;height:63px;background:#f4f4f4;border-radius:10px;"></div>
<div class="t" style="left:1015px;top:1227px;font-size:28px;color:#111;">发起人部门</div>
<div class="a" style="left:1454px;top:1207px;width:200px;height:64px;background:#f4f4f4;border-radius:10px;"></div>
<div class="t" style="left:1479px;top:1225px;font-size:28px;color:#111;">100</div>
<div class="a" style="left:1678px;top:1207px;width:200px;height:64px;background:#f4f4f4;border-radius:10px;"></div>
<div class="t" style="left:1703px;top:1225px;font-size:28px;color:#111;">px</div>
<svg style="left:1834px;top:1232px" width="20" height="13" fill="none" stroke="#aaa" stroke-width="2"><path d="M1 1L10.0 12L19 1"/></svg>
<div class="tg" style="left:1902px;top:1218px;width:88px;height:43px;background:#ababab"></div><div class="knob" style="left:1905px;top:1221px;width:37px;height:37px"></div>
<svg style="left:2028px;top:1225px" width="24" height="24" viewBox="0 0 24 24" fill="none" stroke="#1a35b0" stroke-width="1.9"><path d="M9.60 1.26 L14.40 1.26 L15.01 4.16 L17.29 5.47 L20.10 4.55 L22.50 8.71 L20.30 10.69 L20.30 13.31 L22.50 15.29 L20.10 19.45 L17.29 18.53 L15.01 19.84 L14.40 22.74 L9.60 22.74 L8.99 19.84 L6.71 18.53 L3.90 19.45 L1.50 15.29 L3.70 13.31 L3.70 10.69 L1.50 8.71 L3.90 4.55 L6.71 5.47 L8.99 4.16Z" stroke-linejoin="round"/><circle cx="12" cy="12" r="3.8"/></svg>
<div class="a" style="left:52px;top:1501px;width:2200px;height:2px;background:#efefef"></div>
<div class="a" style="left:2048px;top:1523px;width:80px;height:48px;background:#f3f3f3;border-radius:8px;"></div>
<div class="t" style="left:2065px;top:1535px;font-size:24px;color:#666;">取消</div>
<div class="a" style="left:2144px;top:1523px;width:80px;height:48px;background:#112da0;border-radius:8px;"></div>
<div class="t" style="left:2160px;top:1535px;font-size:24px;color:#fff;font-weight:bold">确定</div>


<svg style="left:0;top:0" width="2950" height="1712"><g fill="#e94129">
<path d="M2432 494 Q2436 504 2446 502 L2574 422 L2590 442 L2618 391 L2559 391 L2578 407 Z"/>
<path d="M2659 1278 Q2662 1290 2672 1287 L2897 1018 L2913 1025 L2920 966 L2863 986 L2880 996 Z"/>
</g></svg>
</body></html>
